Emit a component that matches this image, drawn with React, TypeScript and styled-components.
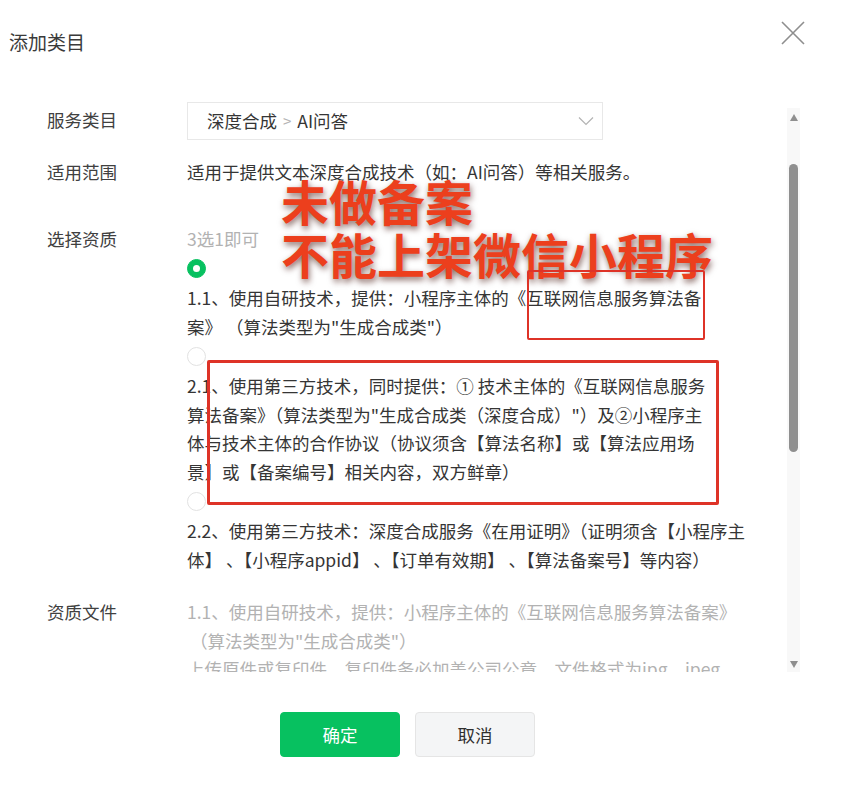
import styled, { createGlobalStyle } from "styled-components";

const GlobalStyle = createGlobalStyle`
  html, body {
    margin: 0;
    padding: 0;
    background: #fff;
  }
  body {
    font-family: "Noto Sans CJK SC", "Noto Sans", sans-serif;
    color: #353535;
  }
`;

const Dialog = styled("div")`
  position: relative;
  width: 844px;
  height: 789px;
  display: flex;
  flex-direction: column;
  background: #fff;
  overflow: hidden;
`;

const Header = styled("div")`
  height: 96px;
  display: flex;
  align-items: flex-start;
  justify-content: space-between;
  padding: 0 38px 0 9px;
  box-sizing: border-box;
`;

const Title = styled("h3")`
  margin: 29px 0 0;
  font-size: 19px;
  font-weight: 400;
  line-height: 26px;
  color: #3a3a3a;
`;

const CloseButton = styled("button")`
  margin-top: 20px;
  width: 26px;
  height: 26px;
  padding: 0;
  border: 0;
  background: none;
  color: #8e8e8e;
  cursor: pointer;
`;

const Body = styled("div")`
  height: 576px;
  display: flex;
`;

const Scroll = styled("div")`
  flex: 1;
  overflow: hidden;
  padding: 6px 0 0 47px;
  box-sizing: border-box;
`;

const Row = styled("div")<{ $gap?: number }>`
  display: grid;
  grid-template-columns: 140px 1fr;
  margin-bottom: ${(p) => p.$gap ?? 0}px;
  font-size: 17.5px;
  line-height: 28.5px;
`;

const Label = styled("div")<{ $top?: number }>`
  color: #404040;
  padding-top: ${(p) => p.$top ?? 0}px;
`;

const Field = styled("div")`
  display: flex;
  flex-direction: column;
  align-items: flex-start;
  white-space: nowrap;
  color: #353535;
`;

const Select = styled("div")`
  width: 416px;
  height: 38px;
  box-sizing: border-box;
  border: 1px solid #e8e8e8;
  display: flex;
  align-items: center;
  justify-content: space-between;
  padding: 0 8px 0 19px;
`;

const Crumb = styled("span")`
  display: flex;
  align-items: center;
  gap: 6px;
  color: #353535;
`;

const Sep = styled("span")`
  color: #b5b5b5;
  font-size: 15px;
`;

const Hint = styled("div")<{ $indent?: number }>`
  color: #b2b2b2;
  padding-left: ${(p) => p.$indent ?? 0}px;
`;

const Radio = styled("span")<{ $checked?: boolean }>`
  display: block;
  width: 19px;
  height: 19px;
  margin: 6px 0;
  border-radius: 50%;
  box-sizing: border-box;
  background: ${(p) => (p.$checked ? "#07c160" : "#fff")};
  border: 1px solid ${(p) => (p.$checked ? "#07c160" : "#e2e2e2")};
  display: flex;
  align-items: center;
  justify-content: center;

  &::after {
    content: "";
    width: 7px;
    height: 7px;
    border-radius: 50%;
    background: ${(p) => (p.$checked ? "#fff" : "transparent")};
  }
`;

const Option = styled("div")`
  color: #353535;
`;

const ScrollBar = styled("div")`
  width: 13px;
  margin: 12px 44px 0 0;
  background: #f8f8f8;
  display: flex;
  flex-direction: column;
  align-items: center;
`;

const Arrow = styled("span")<{ $down?: boolean }>`
  width: 0;
  height: 0;
  margin: ${(p) => (p.$down ? "auto 0 4px" : "6px 0 0")};
  border-left: 4.5px solid transparent;
  border-right: 4.5px solid transparent;
  ${(p) =>
    p.$down
      ? "border-top: 7px solid #8f8f8f;"
      : "border-bottom: 7px solid #8f8f8f;"}
`;

const Thumb = styled("span")`
  width: 9px;
  height: 288px;
  margin-top: 43px;
  border-radius: 5px;
  background: #8f8f8f;
`;

const Footer = styled("div")`
  flex: 1;
  display: flex;
  justify-content: center;
  align-items: flex-start;
  gap: 15px;
  padding: 40px 29px 0 0;
`;

const Button = styled("button")<{ $primary?: boolean }>`
  width: 120px;
  height: 45px;
  border-radius: 4px;
  font-family: inherit;
  font-size: 17.5px;
  cursor: pointer;
  border: 1px solid ${(p) => (p.$primary ? "#07c160" : "#e5e5e5")};
  background: ${(p) => (p.$primary ? "#07c160" : "#f4f5f6")};
  color: ${(p) => (p.$primary ? "#fff" : "#2f2f2f")};
`;

const Stamp = styled("div")`
  position: absolute;
  left: 281px;
  top: 174px;
  font-size: 48px;
  line-height: 53px;
  font-weight: 700;
  color: #ec3f1d;
  text-shadow: 1px 3px 6px rgba(60, 10, 0, 0.6);
  white-space: nowrap;
  pointer-events: none;
`;

const Mark = styled("div")<{ $w: number; $h: number; $x: number; $y: number; $b: number }>`
  position: absolute;
  left: ${(p) => p.$x}px;
  top: ${(p) => p.$y}px;
  width: ${(p) => p.$w}px;
  height: ${(p) => p.$h}px;
  box-sizing: border-box;
  border: ${(p) => p.$b}px solid #de3327;
  border-radius: 2px;
  pointer-events: none;
`;

function Chevron() {
  return (
    <svg width="16" height="10" viewBox="0 0 16 10" fill="none">
      <polyline points="1,1.5 8,8.5 15,1.5" stroke="#b3b3b3" strokeWidth="1.2" />
    </svg>
  );
}

function CloseIcon() {
  return (
    <svg width="26" height="26" viewBox="0 0 26 26">
      <path d="M2 2 L24 24 M24 2 L2 24" stroke="currentColor" strokeWidth="1.6" />
    </svg>
  );
}

export default function App() {
  return (
    <Dialog>
      <GlobalStyle />
      <Header>
        <Title>添加类目</Title>
        <CloseButton aria-label="关闭">
          <CloseIcon />
        </CloseButton>
      </Header>

      <Body>
        <Scroll>
          <Row $gap={18}>
            <Label $top={4}>服务类目</Label>
            <Field>
              <Select>
                <Crumb>
                  深度合成<Sep>&gt;</Sep>AI问答
                </Crumb>
                <Chevron />
              </Select>
            </Field>
          </Row>

          <Row $gap={38}>
            <Label>适用范围</Label>
            <Field>适用于提供文本深度合成技术（如：AI问答）等相关服务。</Field>
          </Row>

          <Row $gap={24}>
            <Label>选择资质</Label>
            <Field>
              <Hint>3选1即可</Hint>
              <Radio $checked />
              <Option>
                1.1、使用自研技术，提供：小程序主体的《互联网信息服务算法备
                <br />
                案》 （算法类型为"生成合成类"）
              </Option>
              <Radio />
              <Option>
                2.1、使用第三方技术，同时提供：① 技术主体的《互联网信息服务
                <br />
                算法备案》（算法类型为"生成合成类（深度合成）"）及②小程序主
                <br />
                体与技术主体的合作协议（协议须含【算法名称】或【算法应用场
                <br />
                景】或【备案编号】相关内容，双方鲜章）
              </Option>
              <Radio />
              <Option>
                2.2、使用第三方技术：深度合成服务《在用证明》（证明须含【小程序主
                <br />
                体】 、【小程序appid】 、【订单有效期】 、【算法备案号】等内容）
              </Option>
            </Field>
          </Row>

          <Row>
            <Label>资质文件</Label>
            <Field>
              <Hint>1.1、使用自研技术，提供：小程序主体的《互联网信息服务算法备案》</Hint>
              <Hint $indent={3}>（算法类型为"生成合成类"）</Hint>
              <Hint>上传原件或复印件，复印件务必加盖公司公章，文件格式为jpg、jpeg</Hint>
            </Field>
          </Row>
        </Scroll>

        <ScrollBar>
          <Arrow />
          <Thumb />
          <Arrow $down />
        </ScrollBar>
      </Body>

      <Footer>
        <Button $primary>确定</Button>
        <Button>取消</Button>
      </Footer>

      <Stamp>
        未做备案
        <br />
        不能上架微信小程序
      </Stamp>
      <Mark $x={527} $y={270} $w={178} $h={70} $b={2} />
      <Mark $x={207} $y={360} $w={512} $h={145} $b={3} />
    </Dialog>
  );
}
